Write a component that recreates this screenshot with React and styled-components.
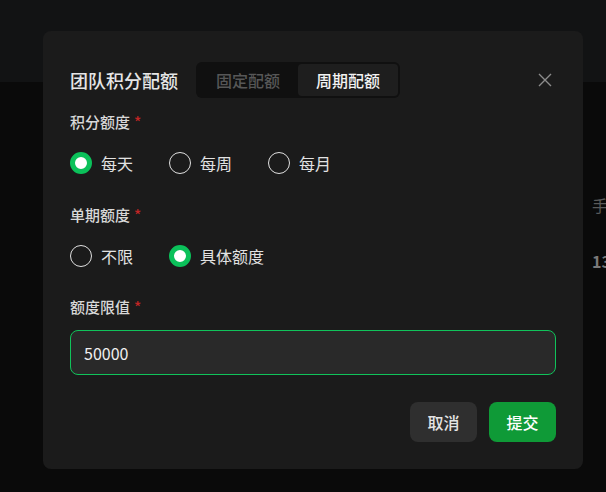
import React, { useState } from "react";
import styled, { createGlobalStyle } from "styled-components";

const GlobalStyle = createGlobalStyle`
  html, body {
    margin: 0;
    padding: 0;
    background: #0a0a0a;
    font-family: "Noto Sans CJK SC", "Noto Sans", sans-serif;
    overflow: hidden;
  }
  * {
    box-sizing: border-box;
  }
`;

const Page = styled.div`
  width: 606px;
  height: 492px;
  position: relative;
  overflow: hidden;
  background: #0a0a0a;
`;

const TopBar = styled.div`
  height: 82px;
  background: #121314;
`;

const Body = styled.div`
  padding: 111px 0 0 592px;
  display: flex;
  flex-direction: column;
  gap: 32px;
  white-space: nowrap;
`;

const Cell = styled.div`
  font-size: ${({ $size }) => $size}px;
  color: ${({ $color }) => $color};
  font-weight: ${({ $bold }) => ($bold ? 600 : 400)};
  line-height: 24px;
`;

const Overlay = styled.div`
  position: absolute;
  inset: 0;
  display: flex;
  align-items: flex-start;
  padding: 31px 0 0 43px;
`;

const Modal = styled.div`
  width: 540px;
  background: #1b1b1b;
  border-radius: 8px;
  padding: 31px 27px 27px;
  display: flex;
  flex-direction: column;
`;

const Header = styled.div`
  height: 36px;
  display: flex;
  align-items: center;
  gap: 18px;
`;

const Title = styled.div`
  font-size: 18px;
  font-weight: 500;
  color: #e6e6e6;
`;

const Segmented = styled.div`
  display: flex;
  height: 36px;
  padding: 2px;
  background: #101010;
  border-radius: 6px;
`;

const Segment = styled.div`
  width: 100px;
  display: flex;
  align-items: center;
  justify-content: center;
  font-size: 16px;
  font-weight: 500;
  border-radius: 4px;
  color: ${({ $active }) => ($active ? "#f2f2f2" : "#575757")};
  background: ${({ $active }) => ($active ? "#1e1e1e" : "transparent")};
`;

const Close = styled.button`
  margin-left: auto;
  margin-right: 4px;
  width: 14px;
  height: 14px;
  padding: 0;
  border: none;
  background: none;
  display: flex;
  cursor: pointer;
`;

const Field = styled.div`
  display: flex;
  flex-direction: column;
  margin-top: ${({ $top }) => $top}px;
`;

const Label = styled.div`
  font-size: 15px;
  line-height: 22px;
  color: #d8d8d8;
  font-weight: 500;
`;

const Star = styled.span`
  color: #c22525;
  margin-left: 4px;
`;

const RadioGroup = styled.div`
  display: flex;
  margin-top: 18px;
`;

const RadioItem = styled.label`
  width: 99px;
  display: flex;
  align-items: center;
  gap: 9px;
  font-size: 16px;
  color: #e2e2e2;
  cursor: pointer;
  white-space: nowrap;
`;

const Circle = styled.span`
  width: 22px;
  height: 22px;
  border-radius: 50%;
  flex-shrink: 0;
  border: ${({ $checked }) => ($checked ? "5.5px solid #0bc15a" : "1.5px solid #e0e0e0")};
  background: ${({ $checked }) => ($checked ? "#ffffff" : "transparent")};
`;

const Input = styled.input`
  margin-top: 12px;
  height: 45px;
  border: 1px solid #10c35a;
  border-radius: 8px;
  background: #292929;
  color: #f0f0f0;
  font-family: inherit;
  font-size: 16px;
  padding: 0 13px;
  outline: none;
  caret-color: #f0f0f0;
`;

const Footer = styled.div`
  margin-top: 27px;
  display: flex;
  justify-content: flex-end;
  gap: 12px;
`;

const Button = styled.button`
  width: 67px;
  height: 40px;
  border: none;
  border-radius: 8px;
  font-family: inherit;
  font-size: 16px;
  font-weight: 500;
  cursor: pointer;
  color: ${({ $primary }) => ($primary ? "#ffffff" : "#e4e4e4")};
  background: ${({ $primary }) => ($primary ? "#0f9a37" : "#2f2f2f")};
`;

function Radio({ checked, children, onClick }) {
  return (
    <RadioItem onClick={onClick}>
      <Circle $checked={checked} />
      {children}
    </RadioItem>
  );
}

export default function App() {
  const [period, setPeriod] = useState("day");
  const [limit, setLimit] = useState("specific");

  return (
    <>
      <GlobalStyle />
      <Page>
        <TopBar />
        <Body>
          <Cell $size={16} $color="#5a5a5a">手机号</Cell>
          <Cell $size={16} $color="#7a7a7a" $bold>13800000000</Cell>
        </Body>
        <Overlay>
          <Modal>
            <Header>
              <Title>团队积分配额</Title>
              <Segmented>
                <Segment>固定配额</Segment>
                <Segment $active>周期配额</Segment>
              </Segmented>
              <Close aria-label="关闭">
                <svg width="14" height="14" viewBox="0 0 14 14">
                  <path d="M1 1L13 13M13 1L1 13" stroke="#8c8c8c" strokeWidth="1.4" fill="none" />
                </svg>
              </Close>
            </Header>

            <Field $top={13}>
              <Label>
                积分额度<Star>*</Star>
              </Label>
              <RadioGroup>
                <Radio checked={period === "day"} onClick={() => setPeriod("day")}>每天</Radio>
                <Radio checked={period === "week"} onClick={() => setPeriod("week")}>每周</Radio>
                <Radio checked={period === "month"} onClick={() => setPeriod("month")}>每月</Radio>
              </RadioGroup>
            </Field>

            <Field $top={29}>
              <Label>
                单期额度<Star>*</Star>
              </Label>
              <RadioGroup>
                <Radio checked={limit === "none"} onClick={() => setLimit("none")}>不限</Radio>
                <Radio checked={limit === "specific"} onClick={() => setLimit("specific")}>具体额度</Radio>
              </RadioGroup>
            </Field>

            <Field $top={28}>
              <Label>
                额度限值<Star>*</Star>
              </Label>
              <Input defaultValue="50000" autoFocus />
            </Field>

            <Footer>
              <Button>取消</Button>
              <Button $primary>提交</Button>
            </Footer>
          </Modal>
        </Overlay>
      </Page>
    </>
  );
}
